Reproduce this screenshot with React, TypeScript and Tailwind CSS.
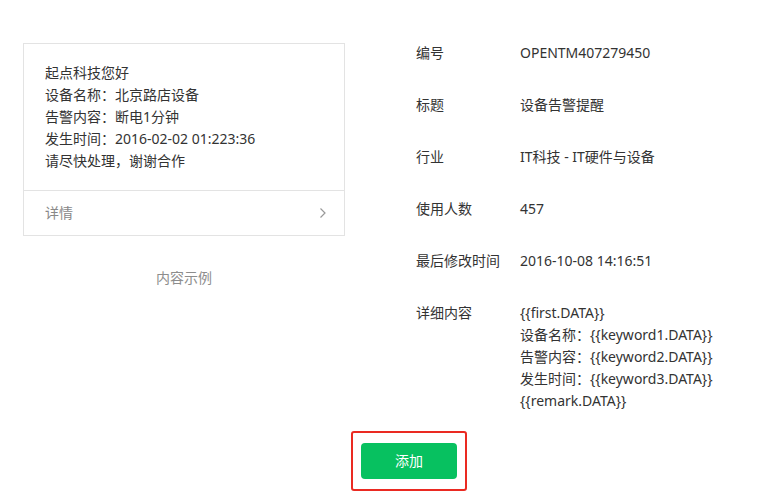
import React from "react";

const rows = [
  { label: "编号", value: "OPENTM407279450" },
  { label: "标题", value: "设备告警提醒" },
  { label: "行业", value: "IT科技 - IT硬件与设备" },
  { label: "使用人数", value: "457" },
  { label: "最后修改时间", value: "2016-10-08 14:16:51" },
];

const detailLines = [
  "{{first.DATA}}",
  "设备名称：{{keyword1.DATA}}",
  "告警内容：{{keyword2.DATA}}",
  "发生时间：{{keyword3.DATA}}",
  "{{remark.DATA}}",
];

const previewLines = [
  "起点科技您好",
  "设备名称：北京路店设备",
  "告警内容：断电1分钟",
  "发生时间：2016-02-02 01:223:36",
  "请尽快处理，谢谢合作",
];

const App = () => {
  return (
    <div
      className="w-[770px] h-[501px] bg-white text-[14px] leading-[22px] text-[#333]"
      style={{ fontFamily: '"Noto Sans", "Noto Sans CJK SC", sans-serif' }}
    >
      <div className="flex pt-[43px]">
        {/* preview card */}
        <div className="ml-[23px] w-[322px]">
          <div className="border border-[#e3e3e3]">
            <div className="pt-[18px] pb-[18px] pl-[21px]">
              {previewLines.map((l) => (
                <div key={l}>{l}</div>
              ))}
            </div>
            <div className="flex items-center justify-between h-[45px] border-t border-[#e3e3e3] pl-[21px] pr-[17px] text-[#888]">
              <span>详情</span>
              <svg width="8" height="12" viewBox="0 0 8 12" fill="none">
                <path d="M1.5 1.5L6 6l-4.5 4.5" stroke="#999" strokeWidth="1.2" />
              </svg>
            </div>
          </div>
          <div className="mt-[31px] text-center text-[#8d8d8d]">内容示例</div>
        </div>

        {/* template info */}
        <div className="ml-[71px] flex flex-col gap-[30px] -mt-[1px]">
          {rows.map((r) => (
            <div key={r.label} className="flex">
              <div className="w-[104px]">{r.label}</div>
              <div>{r.value}</div>
            </div>
          ))}
          <div className="flex">
            <div className="w-[104px]">详细内容</div>
            <div>
              {detailLines.map((l) => (
                <div key={l}>{l}</div>
              ))}
            </div>
          </div>
        </div>
      </div>

      <div className="flex mt-[19px] ml-[351px]">
        <div className="border-2 border-[#ea2a22] rounded-[3px] px-[8px] py-[10px]">
          <button className="w-[96px] h-[36px] rounded-[4px] bg-[#07c160] text-white text-[14px]">
            添加
          </button>
        </div>
      </div>
    </div>
  );
};

export default App;
